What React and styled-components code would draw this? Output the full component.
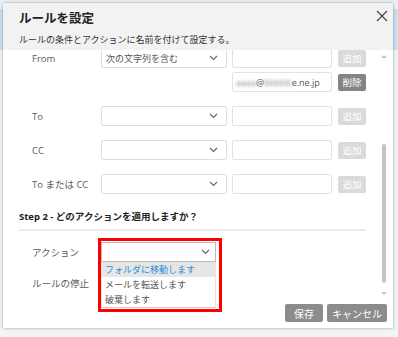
import React from 'react';
import styled, { createGlobalStyle } from 'styled-components';

const GlobalStyle = createGlobalStyle`
  html, body {
    margin: 0;
    padding: 0;
    background: #e9eef2;
    font-family: "Open Sans", "Noto Sans CJK JP", sans-serif;
  }
  * { box-sizing: border-box; }
`;

const Page = styled.div`
  width: 398px;
  height: 337px;
  padding: 3px 5px 0 3px;
  background: linear-gradient(to bottom, #eef1f3 0, #eef1f3 9px, #c9e0ef 9px, #c9e0ef 50px, #f3f4f5 50px);
`;

const Dialog = styled.div`
  width: 390px;
  height: 325px;
  background: #fff;
  box-shadow: 0 0 3px rgba(0, 0, 0, 0.35);
  display: flex;
  flex-direction: column;
`;

const Header = styled.div`
  position: relative;
  z-index: 4;
  background: #f2f2f2;
  padding: 7px 5px 0 16px;
  height: 47px;
`;

const TitleRow = styled.div`
  display: flex;
  justify-content: space-between;
  align-items: flex-start;
`;

const Title = styled.h1`
  margin: 0;
  font-size: 12.5px;
  line-height: 18px;
  font-weight: 700;
  color: #222;
`;

const Close = styled.button`
  border: none;
  background: none;
  padding: 0;
  width: 12px;
  height: 12px;
  display: flex;
`;

const Subtitle = styled.p`
  margin: 5px 0 0;
  font-size: 9px;
  line-height: 14px;
  color: #333;
`;

const Body = styled.div`
  height: 248px;
  display: flex;
`;

const Content = styled.div`
  flex: 1;
  padding: 0 11px 0 16px;
  margin-top: -2px;
`;

const Row = styled.div`
  display: grid;
  grid-template-columns: 64px 126px 100px 29px;
  column-gap: 5px;
  align-items: center;
  height: 20px;
  padding-left: 13px;
  margin-top: ${(p) => p.$gap || 0}px;
`;

const Label = styled.span`
  font-size: 9.5px;
  color: #5a5a5a;
  white-space: nowrap;
`;

const SelectBox = styled.div`
  position: relative;
  height: 20px;
  border: 1px solid #dedede;
  border-radius: 2px;
  background: #fff;
  display: flex;
  align-items: center;
  justify-content: space-between;
  padding: 0 8px 0 4px;
  font-size: 9px;
  color: #555;
  ${(p) => p.$open && 'border-color: #bcbcbc; border-radius: 0; padding-right: 5px;'}
`;

const TextInput = styled.div`
  grid-column: 3;
  height: 20px;
  border: 1px solid #e2e2e2;
  border-radius: 2px;
  background: #fff;
  font-size: 9px;
  color: #555;
  display: flex;
  align-items: center;
  padding: 0 3px;
  white-space: nowrap;
  overflow: hidden;
`;

const Blur = styled.span`
  filter: blur(1.4px);
  color: #8a8a8a;
`;

const SmallButton = styled.button`
  grid-column: 4;
  margin-left: 1px;
  height: 17px;
  border: none;
  border-radius: 2px;
  padding: 0;
  font-family: inherit;
  font-size: 9.5px;
  color: #fff;
  background: ${(p) => (p.$dark ? '#858585' : '#dadada')};
`;

const StepTitle = styled.h2`
  margin: 15px 0 0;
  padding-bottom: 4px;
  border-bottom: 2px solid #ececec;
  font-size: 9.5px;
  line-height: 16px;
  font-weight: 700;
  color: #222;
`;

const ActionRow = styled(Row)`
  grid-template-columns: 64px 115px;
`;

const Dropdown = styled.ul`
  position: absolute;
  top: 19px;
  left: -1px;
  width: 115px;
  margin: 0;
  padding: 0;
  list-style: none;
  background: #fff;
  border: 1px solid #e4e4e4;
  border-top: none;
  border-bottom-color: #e3c4c4;
  z-index: 2;
`;

const Option = styled.li`
  height: 15px;
  line-height: 15px;
  padding-left: 3px;
  font-size: 9px;
  color: ${(p) => (p.$active ? '#2d8bd3' : '#555')};
  background: ${(p) => (p.$active ? '#e6e6e6' : '#fff')};
  white-space: nowrap;
`;

const Highlight = styled.div`
  position: absolute;
  top: -5px;
  left: -4px;
  width: 124px;
  height: 74px;
  border: 3px solid #f00;
  pointer-events: none;
  z-index: 3;
`;

const Scrollbar = styled.div`
  width: 13px;
  display: flex;
  flex-direction: column;
  align-items: center;
  padding-top: 5px;
  margin-right: 3px;
`;

const Arrow = styled.div`
  width: 0;
  height: 0;
  border-left: 3px solid transparent;
  border-right: 3px solid transparent;
  ${(p) => (p.$down ? 'border-top: 3px solid #c4c4c4; margin-top: 9px;' : 'border-bottom: 3px solid #c4c4c4;')}
`;

const Thumb = styled.div`
  width: 4px;
  height: 139px;
  margin-top: 86px;
  border-radius: 2px;
  background: #c2c2c2;
`;

const Footer = styled.div`
  display: flex;
  justify-content: flex-end;
  gap: 4px;
  padding: 6px 6px 6px 0;
`;

const FooterButton = styled.button`
  height: 18px;
  width: ${(p) => p.$w}px;
  border: none;
  border-radius: 2px;
  padding: 0;
  font-family: inherit;
  font-size: 10px;
  color: #fff;
  background: #8c8c8c;
`;

const Chevron = () => (
  <svg width="9" height="6" viewBox="0 0 9 6">
    <path d="M1 1l3.5 3.5L8 1" fill="none" stroke="#666" strokeWidth="1.1" />
  </svg>
);

const conditionRows = ['To', 'CC', 'To または CC'];

const options = ['フォルダに移動します', 'メールを転送します', '破棄します'];

const App = () => (
  <>
    <GlobalStyle />
    <Page>
      <Dialog>
        <Header>
          <TitleRow>
            <Title>ルールを設定</Title>
            <Close aria-label="close">
              <svg width="12" height="12" viewBox="0 0 12 12">
                <path d="M1 1l10 10M11 1L1 11" stroke="#444" strokeWidth="1.2" />
              </svg>
            </Close>
          </TitleRow>
          <Subtitle>ルールの条件とアクションに名前を付けて設定する。</Subtitle>
        </Header>
        <Body>
          <Content>
            <Row>
              <Label>From</Label>
              <SelectBox>
                次の文字列を含む
                <Chevron />
              </SelectBox>
              <TextInput />
              <SmallButton>追加</SmallButton>
            </Row>
            <Row $gap={4}>
              <TextInput>
                <Blur>aaaa</Blur>@<Blur>bbbbb</Blur>e.ne.jp
              </TextInput>
              <SmallButton $dark>削除</SmallButton>
            </Row>
            {conditionRows.map((label) => (
              <Row key={label} $gap={14}>
                <Label>{label}</Label>
                <SelectBox>
                  <span />
                  <Chevron />
                </SelectBox>
                <TextInput />
                <SmallButton>追加</SmallButton>
              </Row>
            ))}
            <StepTitle>Step 2 - どのアクションを適用しますか？</StepTitle>
            <ActionRow $gap={11}>
              <Label>アクション</Label>
              <SelectBox $open>
                <span />
                <Chevron />
                <Dropdown>
                  {options.map((o, i) => (
                    <Option key={o} $active={i === 0}>{o}</Option>
                  ))}
                </Dropdown>
                <Highlight />
              </SelectBox>
            </ActionRow>
            <ActionRow $gap={11}>
              <Label>ルールの停止</Label>
            </ActionRow>
          </Content>
          <Scrollbar>
            <Arrow />
            <Thumb />
            <Arrow $down />
          </Scrollbar>
        </Body>
        <Footer>
          <FooterButton $w={38}>保存</FooterButton>
          <FooterButton $w={60}>キャンセル</FooterButton>
        </Footer>
      </Dialog>
    </Page>
  </>
);

export default App;
